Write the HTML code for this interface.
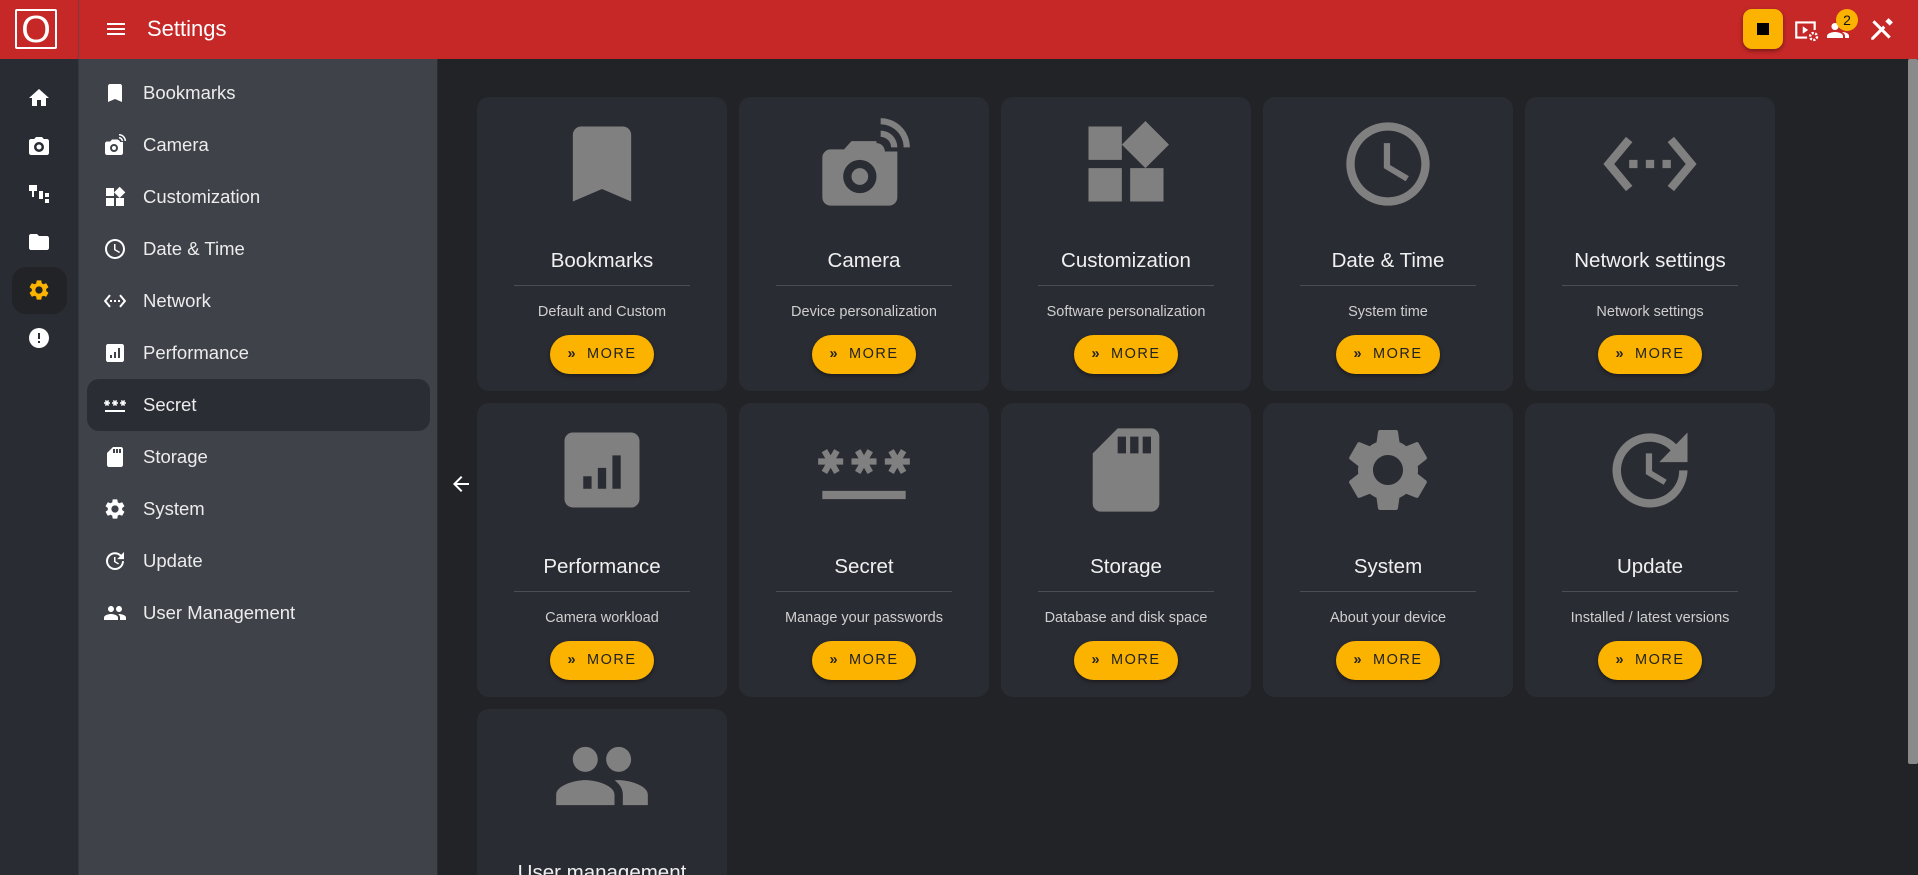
<!DOCTYPE html>
<html><head><meta charset="utf-8">
<style>
*{margin:0;padding:0;box-sizing:border-box}
html,body{width:1918px;height:875px;overflow:hidden;background:#222327;font-family:"Liberation Sans",sans-serif}
#w{position:relative;width:1918px;height:875px;overflow:hidden}
.hdr{position:absolute;left:0;top:0;width:1918px;height:59px;background:#c62828}
.rail{position:absolute;left:0;top:59px;width:78px;height:816px;background:#292c33}
.hdiv{position:absolute;left:78px;top:0;width:1px;height:875px;background:#3c4a55;opacity:.6}
.side{position:absolute;left:79px;top:59px;width:359px;height:816px;background:#3f4249;border-right:1px solid #2b2d33}
.si{position:absolute;left:0;width:359px;height:52px;color:#ececec;font-size:18.5px}
.si svg{position:absolute;left:24px;top:14px;width:24px;height:24px;fill:#fff}
.si span{position:absolute;left:64px;top:15px}
.act{position:absolute;left:8px;top:320px;width:343px;height:52px;background:#2b2d34;border-radius:12px}
.ri{position:absolute;left:27px;width:24px;height:24px;fill:#fff}
.card{position:absolute;width:250px;height:294px;background:#2a2c33;border-radius:12px;text-align:center}
.card svg.ic{position:absolute;left:75px;top:17px;width:100px;height:100px;fill:#808080}
.card .t{position:absolute;left:0;right:0;top:152px;font-size:20.5px;color:#f0f0f0}
.card .d{position:absolute;left:37px;right:37px;top:188px;height:1px;background:#4a4d55}
.card .s{position:absolute;left:0;right:0;top:207px;font-size:14.5px;color:#cfcfcf}
.card .b{position:absolute;left:73px;top:238px;width:104px;height:39px;border-radius:20px;background:#fbb300;box-shadow:0 2px 4px rgba(0,0,0,.4);font-size:14.5px;letter-spacing:1.5px;color:#222;line-height:39px}
.card .b i{font-style:normal;font-weight:bold;margin-right:10px}
</style></head><body><div id="w">
<div class="hdr">
  <div style="position:absolute;left:15px;top:9px;width:42px;height:40px;border:2px solid #fff;border-radius:2px;color:#fff;font-size:38px;line-height:38px;text-align:center">O</div>
  <svg style="position:absolute;left:104px;top:17px" width="24" height="24" viewBox="0 0 24 24" fill="#fff"><path d="M3 18h18v-2H3v2zm0-5h18v-2H3v2zm0-7v2h18V6H3z"/></svg>
  <div style="position:absolute;left:147px;top:16px;color:#fff;font-size:22px">Settings</div>
  <div style="position:absolute;left:1743px;top:9px;width:40px;height:40px;background:#fbb300;border-radius:9px;box-shadow:0 2px 5px rgba(0,0,0,.4)"><div style="position:absolute;left:14px;top:14px;width:12px;height:12px;background:#000"></div></div>
  <svg style="position:absolute;left:1793px;top:17px" width="26" height="26" viewBox="0 0 24 24" fill="#fff"><path d="M2 4h19v8h-2V6H4v12h9v2H2z"/><path d="M9 8.5v7l5-3.5z"/><circle cx="19" cy="18" r="3.2" fill="none" stroke="#fff" stroke-width="2.2" stroke-dasharray="2 1.3"/></svg>
  <svg style="position:absolute;left:1826px;top:18px" width="24" height="24" viewBox="0 0 24 24" fill="#fff"><path d="M9 12c2 0 3.5-1.6 3.5-3.5S11 5 9 5 5.5 6.6 5.5 8.5 7 12 9 12zm0 2c-2.7 0-8 1.3-8 4v2h16v-2c0-2.7-5.3-4-8-4zm7 0c2.7 0 7 1.3 7 4v2h-4v-2c0-1.5-1-3-3-4z"/></svg>
  <div style="position:absolute;left:1836px;top:9px;width:22px;height:22px;border-radius:50%;background:#fbb300;color:#111;font-size:14px;text-align:center;line-height:22px">2</div>
  <svg style="position:absolute;left:1868px;top:17px" width="26" height="26" viewBox="0 0 24 24" fill="#fff"><path d="M4 5l2-2 15 15-2 2z"/><path d="M3 19l11-11 2 2-11 11H3z M16 4l3-3 4 4-3 3z"/></svg>
</div>
<div class="rail">
  <svg class="ri" style="top:27px" viewBox="0 0 24 24"><path d="M10 20v-6h4v6h5v-8h3L12 3 2 12h3v8z"/></svg>
  <svg class="ri" style="top:75px" viewBox="0 0 24 24"><path d="M20 5h-3.2L15 3H9L7.2 5H4c-1.1 0-2 .9-2 2v12c0 1.1.9 2 2 2h16c1.1 0 2-.9 2-2V7c0-1.1-.9-2-2-2zm-8 13a5 5 0 110-10 5 5 0 010 10zm0-2.5a2.5 2.5 0 100-5 2.5 2.5 0 000 5z"/></svg>
  <svg class="ri" style="top:122px" viewBox="0 0 24 24"><path d="M2 4h8v6H7v2h5v-2h4v4h-4v-2H7v4h5v-2h4v4h-4v-2H5V10H2z M18 12h4v4h-4zM18 18h4v4h-4z"/></svg>
  <svg class="ri" style="top:171px" viewBox="0 0 24 24"><path d="M10 4H4c-1.1 0-2 .9-2 2v12c0 1.1.9 2 2 2h16c1.1 0 2-.9 2-2V8c0-1.1-.9-2-2-2h-8l-2-2z"/></svg>
  <div style="position:absolute;left:12px;top:208px;width:55px;height:47px;background:#222327;border-radius:14px"></div>
  <svg class="ri" style="top:219px;fill:#fbb300" viewBox="0 0 24 24"><path d="M19.14 12.94c.04-.3.06-.61.06-.94 0-.32-.02-.64-.07-.94l2.03-1.58a.49.49 0 00.12-.61l-1.92-3.32a.488.488 0 00-.59-.22l-2.39.96c-.5-.38-1.03-.7-1.62-.94l-.36-2.54a.484.484 0 00-.48-.41h-3.840c-.24 0-.43.17-.47.41l-.36 2.54c-.59.24-1.13.57-1.62.94l-2.39-.96c-.22-.08-.47 0-.59.22L2.74 8.87c-.12.21-.08.47.12.61l2.03 1.58c-.05.3-.09.63-.09.94s.02.64.07.94l-2.03 1.58a.49.49 0 00-.12.61l1.92 3.32c.12.22.37.29.59.22l2.39-.96c.5.38 1.03.7 1.62.94l.36 2.54c.05.24.24.41.48.41h3.84c.24 0 .44-.17.47-.41l.36-2.54c.59-.24 1.13-.56 1.62-.94l2.39.96c.22.08.47 0 .59-.22l1.92-3.32c.12-.22.07-.47-.12-.61l-2.01-1.58zM12 15.6c-1.98 0-3.6-1.62-3.6-3.6s1.62-3.6 3.6-3.6 3.6 1.62 3.6 3.6-1.62 3.6-3.6 3.6z"/></svg>
  <svg class="ri" style="top:267px" viewBox="0 0 24 24"><path d="M12 2a10 10 0 100 20 10 10 0 000-20zm1 15h-2v-2h2v2zm0-4h-2V7h2v6z"/></svg>
</div>
<div class="hdiv"></div>
<div class="side">
  <div class="act"></div>
  <div class="si" style="top:8px"><svg viewBox="0 0 24 24"><path d="M17 3H7c-1.1 0-2 .9-2 2v16l7-3 7 3V5c0-1.1-.9-2-2-2z"/></svg><span>Bookmarks</span></div>
  <div class="si" style="top:60px"><svg viewBox="0 0 24 24"><path d="M16 1v1.5a5.5 5.5 0 015.5 5.5H23a7 7 0 00-7-7zm0 3v1.5A2.5 2.5 0 0118.5 8H20a4 4 0 00-4-4zM17 9c0-1.1-.9-2-2-2v-.5H9L7.2 8.5H4c-1.1 0-2 .9-2 2V20c0 1.1.9 2 2 2h14c1.1 0 2-.9 2-2V9h-3zm-6 10a4 4 0 110-8 4 4 0 010 8zm0-2a2 2 0 100-4 2 2 0 000 4z"/></svg><span>Camera</span></div>
  <div class="si" style="top:112px"><svg viewBox="0 0 24 24"><path d="M13 13v8h8v-8h-8zM3 21h8v-8H3v8zM3 3v8h8V3H3zm13.66-1.31L11 7.34 16.66 13l5.66-5.66-5.66-5.65z"/></svg><span>Customization</span></div>
  <div class="si" style="top:164px"><svg viewBox="0 0 24 24"><path d="M11.99 2C6.47 2 2 6.48 2 12s4.47 10 9.99 10C17.52 22 22 17.52 22 12S17.52 2 11.99 2zM12 20c-4.42 0-8-3.58-8-8s3.58-8 8-8 8 3.58 8 8-3.58 8-8 8zm.5-13H11v6l5.25 3.15.75-1.23-4.5-2.67z"/></svg><span>Date &amp; Time</span></div>
  <div class="si" style="top:216px"><svg viewBox="0 0 24 24"><path d="M7.77 6.76L6.23 5.48.82 12l5.41 6.52 1.54-1.28L3.42 12l4.35-5.24zM7 13h2v-2H7v2zm10-2h-2v2h2v-2zm-6 2h2v-2h-2v2zm6.77-7.52l-1.54 1.28L20.58 12l-4.35 5.24 1.54 1.28L23.18 12l-5.41-6.52z"/></svg><span>Network</span></div>
  <div class="si" style="top:268px"><svg viewBox="0 0 24 24"><path d="M19 3H5c-1.1 0-2 .9-2 2v14c0 1.1.9 2 2 2h14c1.1 0 2-.9 2-2V5c0-1.1-.9-2-2-2zM9 17H7v-3h2v3zm4 0h-2v-6h2v6zm4 0h-2V7h2v10z"/></svg><span>Performance</span></div>
  <div class="si" style="top:320px"><svg viewBox="0 0 24 24"><path d="M2 17h20v2H2zm1.15-4.050L4 11.47l.85 1.48 1.3-.75-.85-1.48H7v-1.5H5.3l.85-1.47L4.85 7 4 8.47 3.15 7l-1.3.75.85 1.47H1v1.5h1.7l-.85 1.48 1.3.75zm6.7-.75l1.3.75.85-1.48.85 1.48 1.3-.75-.85-1.48H15v-1.5h-1.7l.85-1.47-1.3-.75L12 8.47 11.15 7l-1.3.75.85 1.47H9v1.5h1.7l-.85 1.48zM23 9.22h-1.7l.85-1.47-1.3-.75L20 8.47 19.15 7l-1.3.75.85 1.47H17v1.5h1.7l-.85 1.48 1.3.75.85-1.48.85 1.48 1.3-.75-.85-1.48H23v-1.5z"/></svg><span>Secret</span></div>
  <div class="si" style="top:372px"><svg viewBox="0 0 24 24"><path d="M18 2h-8L4.02 8 4 20c0 1.1.9 2 2 2h12c1.1 0 2-.9 2-2V4c0-1.1-.9-2-2-2zm-6 6h-2V4h2v4zm3 0h-2V4h2v4zm3 0h-2V4h2v4z"/></svg><span>Storage</span></div>
  <div class="si" style="top:424px"><svg viewBox="0 0 24 24"><path d="M19.14 12.94c.04-.3.06-.61.06-.94 0-.32-.02-.64-.07-.94l2.03-1.58a.49.49 0 00.12-.61l-1.92-3.32a.488.488 0 00-.59-.22l-2.39.96c-.5-.38-1.03-.7-1.62-.94l-.36-2.54a.484.484 0 00-.48-.41h-3.84c-.24 0-.43.17-.47.41l-.36 2.54c-.59.24-1.13.57-1.62.94l-2.39-.96c-.22-.08-.47 0-.59.22L2.74 8.87c-.12.21-.08.47.12.61l2.03 1.58c-.05.3-.09.63-.09.94s.02.64.07.94l-2.03 1.58a.49.49 0 00-.12.61l1.92 3.32c.12.22.37.29.59.22l2.39-.96c.5.38 1.03.7 1.62.94l.36 2.54c.05.24.24.41.48.41h3.84c.24 0 .44-.17.47-.41l.36-2.54c.59-.24 1.13-.56 1.62-.94l2.39.96c.22.08.47 0 .59-.22l1.92-3.32c.12-.22.07-.47-.12-.61l-2.01-1.58zM12 15.6c-1.98 0-3.6-1.62-3.6-3.6s1.62-3.6 3.6-3.6 3.6 1.62 3.6 3.6-1.62 3.6-3.6 3.6z"/></svg><span>System</span></div>
  <div class="si" style="top:476px"><svg viewBox="0 0 24 24"><path d="M21 10.12h-6.78l2.74-2.82c-2.73-2.7-7.15-2.8-9.88-.1-2.73 2.71-2.73 7.08 0 9.79s7.15 2.71 9.88 0C18.32 15.65 19 14.08 19 12.1h2c0 1.98-.88 4.55-2.64 6.29-3.51 3.48-9.21 3.48-12.72 0-3.5-3.47-3.53-9.11-.02-12.58s9.14-3.47 12.65 0L21 3v7.12zM12.5 8v4.25l3.5 2.08-.72 1.21L11 13V8h1.5z"/></svg><span>Update</span></div>
  <div class="si" style="top:528px"><svg viewBox="0 0 24 24"><path d="M16 11c1.66 0 2.99-1.34 2.99-3S17.66 5 16 5c-1.66 0-3 1.34-3 3s1.34 3 3 3zm-8 0c1.66 0 2.99-1.34 2.99-3S9.66 5 8 5C6.34 5 5 6.34 5 8s1.34 3 3 3zm0 2c-2.33 0-7 1.17-7 3.5V19h14v-2.5c0-2.33-4.67-3.5-7-3.5zm8 0c-.29 0-.62.02-.97.05 1.16.84 1.97 1.97 1.97 3.45V19h6v-2.5c0-2.33-4.67-3.5-7-3.5z"/></svg><span>User Management</span></div>
</div>
<svg style="position:absolute;left:449px;top:472px" width="24" height="24" viewBox="0 0 24 24" fill="#fff"><path d="M20 11H7.83l5.59-5.59L12 4l-8 8 8 8 1.41-1.41L7.83 13H20v-2z"/></svg>
<div style="position:absolute;left:1908px;top:59px;width:10px;height:705px;background:#8a8a8a;border-radius:2px"></div>

<div class="card" style="left:477px;top:97px"><svg class="ic" viewBox="0 0 24 24"><path d="M17 3H7c-1.1 0-2 .9-2 2v16l7-3 7 3V5c0-1.1-.9-2-2-2z"/></svg><div class="t">Bookmarks</div><div class="d"></div><div class="s">Default and Custom</div><div class="b"><i>&raquo;</i>MORE</div></div>
<div class="card" style="left:739px;top:97px"><svg class="ic" viewBox="0 0 24 24"><path d="M16 1v1.5a5.5 5.5 0 015.5 5.5H23a7 7 0 00-7-7zm0 3v1.5A2.5 2.5 0 0118.5 8H20a4 4 0 00-4-4zM17 9c0-1.1-.9-2-2-2v-.5H9L7.2 8.5H4c-1.1 0-2 .9-2 2V20c0 1.1.9 2 2 2h14c1.1 0 2-.9 2-2V9h-3zm-6 10a4 4 0 110-8 4 4 0 010 8zm0-2a2 2 0 100-4 2 2 0 000 4z"/></svg><div class="t">Camera</div><div class="d"></div><div class="s">Device personalization</div><div class="b"><i>&raquo;</i>MORE</div></div>
<div class="card" style="left:1001px;top:97px"><svg class="ic" viewBox="0 0 24 24"><path d="M13 13v8h8v-8h-8zM3 21h8v-8H3v8zM3 3v8h8V3H3zm13.66-1.31L11 7.34 16.66 13l5.66-5.66-5.66-5.65z"/></svg><div class="t">Customization</div><div class="d"></div><div class="s">Software personalization</div><div class="b"><i>&raquo;</i>MORE</div></div>
<div class="card" style="left:1263px;top:97px"><svg class="ic" viewBox="0 0 24 24"><path d="M11.99 2C6.47 2 2 6.48 2 12s4.47 10 9.99 10C17.52 22 22 17.52 22 12S17.52 2 11.99 2zM12 20c-4.42 0-8-3.58-8-8s3.58-8 8-8 8 3.58 8 8-3.58 8-8 8zm.5-13H11v6l5.25 3.15.75-1.23-4.5-2.67z"/></svg><div class="t">Date &amp; Time</div><div class="d"></div><div class="s">System time</div><div class="b"><i>&raquo;</i>MORE</div></div>
<div class="card" style="left:1525px;top:97px"><svg class="ic" viewBox="0 0 24 24"><path d="M7.77 6.76L6.23 5.48.82 12l5.41 6.52 1.54-1.28L3.42 12l4.35-5.24zM7 13h2v-2H7v2zm10-2h-2v2h2v-2zm-6 2h2v-2h-2v2zm6.77-7.52l-1.54 1.28L20.58 12l-4.35 5.24 1.54 1.28L23.18 12l-5.41-6.52z"/></svg><div class="t">Network settings</div><div class="d"></div><div class="s">Network settings</div><div class="b"><i>&raquo;</i>MORE</div></div>

<div class="card" style="left:477px;top:403px"><svg class="ic" viewBox="0 0 24 24"><path d="M19 3H5c-1.1 0-2 .9-2 2v14c0 1.1.9 2 2 2h14c1.1 0 2-.9 2-2V5c0-1.1-.9-2-2-2zM9.5 16.5h-2v-3h2v3zm3.5 0h-2v-5h2v5zm3.5 0h-2v-8h2v8z"/></svg><div class="t">Performance</div><div class="d"></div><div class="s">Camera workload</div><div class="b"><i>&raquo;</i>MORE</div></div>
<div class="card" style="left:739px;top:403px"><svg class="ic" viewBox="0 0 24 24"><path d="M2 17h20v2H2zm1.15-4.05L4 11.47l.85 1.48 1.3-.75-.85-1.48H7v-1.5H5.3l.85-1.47L4.85 7 4 8.47 3.15 7l-1.3.75.85 1.47H1v1.5h1.7l-.85 1.48 1.3.75zm6.7-.75l1.3.75.85-1.48.85 1.48 1.3-.75-.85-1.48H15v-1.5h-1.7l.85-1.47-1.3-.75L12 8.47 11.15 7l-1.3.75.85 1.47H9v1.5h1.7l-.85 1.48zM23 9.22h-1.7l.85-1.47-1.3-.75L20 8.47 19.15 7l-1.3.75.85 1.47H17v1.5h1.7l-.85 1.48 1.3.75.85-1.48.85 1.48 1.3-.75-.85-1.48H23v-1.5z"/></svg><div class="t">Secret</div><div class="d"></div><div class="s">Manage your passwords</div><div class="b"><i>&raquo;</i>MORE</div></div>
<div class="card" style="left:1001px;top:403px"><svg class="ic" viewBox="0 0 24 24"><path d="M18 2h-8L4.02 8 4 20c0 1.1.9 2 2 2h12c1.1 0 2-.9 2-2V4c0-1.1-.9-2-2-2zm-6 6h-2V4h2v4zm3 0h-2V4h2v4zm3 0h-2V4h2v4z"/></svg><div class="t">Storage</div><div class="d"></div><div class="s">Database and disk space</div><div class="b"><i>&raquo;</i>MORE</div></div>
<div class="card" style="left:1263px;top:403px"><svg class="ic" viewBox="0 0 24 24"><path d="M19.14 12.94c.04-.3.06-.61.06-.94 0-.32-.02-.64-.07-.94l2.03-1.58a.49.49 0 00.12-.61l-1.92-3.32a.488.488 0 00-.59-.22l-2.39.96c-.5-.38-1.03-.7-1.62-.94l-.36-2.54a.484.484 0 00-.48-.41h-3.84c-.24 0-.43.17-.47.41l-.36 2.54c-.59.24-1.13.57-1.62.94l-2.39-.96c-.22-.08-.47 0-.59.22L2.74 8.87c-.12.21-.08.47.12.61l2.03 1.58c-.05.3-.09.63-.09.94s.02.64.07.94l-2.03 1.58a.49.49 0 00-.12.61l1.92 3.32c.12.22.37.29.59.22l2.39-.96c.5.38 1.03.7 1.62.94l.36 2.54c.05.24.24.41.48.41h3.84c.24 0 .44-.17.47-.41l.36-2.54c.59-.24 1.13-.56 1.62-.94l2.39.96c.22.08.47 0 .59-.22l1.92-3.32c.12-.22.07-.47-.12-.61l-2.01-1.58zM12 15.6c-1.98 0-3.6-1.62-3.6-3.6s1.62-3.6 3.6-3.6 3.6 1.62 3.6 3.6-1.62 3.6-3.6 3.6z"/></svg><div class="t">System</div><div class="d"></div><div class="s">About your device</div><div class="b"><i>&raquo;</i>MORE</div></div>
<div class="card" style="left:1525px;top:403px"><svg class="ic" viewBox="0 0 24 24"><path d="M21 10.12h-6.78l2.74-2.82c-2.73-2.7-7.15-2.8-9.88-.1-2.73 2.71-2.73 7.08 0 9.79s7.15 2.71 9.88 0C18.32 15.65 19 14.08 19 12.1h2c0 1.98-.88 4.55-2.64 6.29-3.51 3.48-9.21 3.48-12.72 0-3.5-3.47-3.53-9.11-.02-12.58s9.14-3.47 12.65 0L21 3v7.12zM12.5 8v4.25l3.5 2.08-.72 1.21L11 13V8h1.5z"/></svg><div class="t">Update</div><div class="d"></div><div class="s">Installed / latest versions</div><div class="b"><i>&raquo;</i>MORE</div></div>

<div class="card" style="left:477px;top:709px"><svg class="ic" viewBox="0 0 24 24"><path d="M16 11c1.66 0 2.99-1.34 2.99-3S17.66 5 16 5c-1.66 0-3 1.34-3 3s1.34 3 3 3zm-8 0c1.66 0 2.99-1.34 2.99-3S9.66 5 8 5C6.34 5 5 6.34 5 8s1.34 3 3 3zm0 2c-2.33 0-7 1.17-7 3.5V19h14v-2.5c0-2.33-4.67-3.5-7-3.5zm8 0c-.29 0-.62.02-.97.05 1.16.84 1.97 1.97 1.97 3.45V19h6v-2.5c0-2.33-4.67-3.5-7-3.5z"/></svg><div class="t">User management</div><div class="d"></div><div class="s">Users and roles</div><div class="b"><i>&raquo;</i>MORE</div></div>
</div></body></html>
